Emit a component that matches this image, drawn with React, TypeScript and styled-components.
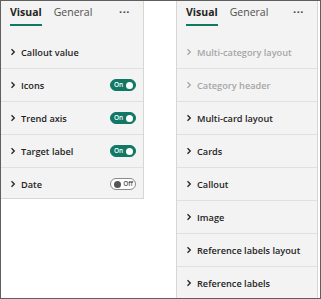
import React from "react";
import styled, { createGlobalStyle } from "styled-components";

const GlobalStyle = createGlobalStyle`
	html, body {
		margin: 0;
		padding: 0;
		background: #ffffff;
	}
	* {
		box-sizing: border-box;
	}
`;

const Frame = styled.div`
	width: 321px;
	height: 299px;
	border: 1px solid #5f5f5f;
	background: #ffffff;
	display: flex;
	align-items: flex-start;
	gap: 32px;
	overflow: hidden;
	font-family: "Open Sans", "Noto Sans", sans-serif;
`;

const Panel = styled.div<{ $width: number; $height: number }>`
	width: ${p => p.$width}px;
	height: ${p => p.$height}px;
	background: #f3f3f3;
	border-right: 1px solid #d6d6d6;
	border-bottom: 1px solid #d6d6d6;
	border-left: ${p => (p.$height > 250 ? "1px solid #d6d6d6" : "none")};
	overflow: hidden;
	display: flex;
	flex-direction: column;
`;

const Header = styled.div`
	height: 35px;
	flex-shrink: 0;
	display: flex;
	align-items: flex-start;
	padding: 4px 9px 0 9px;
`;

const Tab = styled.div<{ $active?: boolean }>`
	font-size: 10.5px;
	font-weight: ${p => (p.$active ? 700 : 400)};
	color: ${p => (p.$active ? "#252423" : "#4f4f4f")};
	padding-bottom: 4px;
	margin-right: 12px;
	line-height: 15px;
	border-bottom: 2px solid ${p => (p.$active ? "#117865" : "transparent")};
`;

const More = styled.div`
	margin-left: auto;
	font-size: 11px;
	color: #444;
	letter-spacing: 0.5px;
	line-height: 13px;
	font-weight: 700;
	margin-right: 4px;
`;

const Row = styled.div<{ $disabled?: boolean }>`
	height: 33px;
	flex-shrink: 0;
	border-bottom: 1px solid #e0e0e0;
	display: flex;
	align-items: center;
	padding: 0 7px 0 9px;
	font-size: 9.2px;
	font-weight: 600;
	color: ${p => (p.$disabled ? "#a6a6a6" : "#252423")};
`;

const Chevron = styled.svg`
	width: 6px;
	height: 8px;
	margin-right: 5px;
	flex-shrink: 0;
`;

const Label = styled.span`
	flex: 1;
	white-space: nowrap;
`;

const Toggle = styled.div<{ $on: boolean }>`
	width: 26px;
	height: 12px;
	border-radius: 6px;
	display: flex;
	align-items: center;
	flex-direction: ${p => (p.$on ? "row" : "row-reverse")};
	justify-content: space-between;
	padding: 0 2px 0 3px;
	background: ${p => (p.$on ? "#117865" : "#ffffff")};
	border: 1px solid ${p => (p.$on ? "#117865" : "#8a8a8a")};
	font-size: 6.5px;
	font-weight: 600;
	color: ${p => (p.$on ? "#ffffff" : "#555555")};
	line-height: 1;
`;

const Knob = styled.span<{ $on: boolean }>`
	width: 7px;
	height: 7px;
	border-radius: 50%;
	background: ${p => (p.$on ? "#ffffff" : "#555555")};
`;

const Arrow = ({ color }: { color: string }) => (
	<Chevron viewBox="0 0 6 8">
		<path d="M1.5 1.2 L4.3 4 L1.5 6.8" fill="none" stroke={color} strokeWidth="1.3" />
	</Chevron>
);

type Item = { label: string; toggle?: boolean; disabled?: boolean };

const leftItems: Item[] = [
	{ label: "Callout value" },
	{ label: "Icons", toggle: true },
	{ label: "Trend axis", toggle: true },
	{ label: "Target label", toggle: true },
	{ label: "Date", toggle: false },
];

const rightItems: Item[] = [
	{ label: "Multi-category layout", disabled: true },
	{ label: "Category header", disabled: true },
	{ label: "Multi-card layout" },
	{ label: "Cards" },
	{ label: "Callout" },
	{ label: "Image" },
	{ label: "Reference labels layout" },
	{ label: "Reference labels" },
];

const FormatPane = ({ items, width, height }: { items: Item[]; width: number; height: number }) => (
	<Panel $width={width} $height={height}>
		<Header>
			<Tab $active>Visual</Tab>
			<Tab>General</Tab>
			<More>···</More>
		</Header>
		{items.map(item => (
			<Row key={item.label} $disabled={item.disabled}>
				<Arrow color={item.disabled ? "#a6a6a6" : "#252423"} />
				<Label>{item.label}</Label>
				{item.toggle !== undefined && (
					<Toggle $on={item.toggle}>
						<span>{item.toggle ? "On" : "Off"}</span>
						<Knob $on={item.toggle} />
					</Toggle>
				)}
			</Row>
		))}
	</Panel>
);

export default function App() {
	return (
		<>
			<GlobalStyle />
			<Frame>
				<FormatPane items={leftItems} width={143} height={198} />
				<FormatPane items={rightItems} width={142} height={300} />
			</Frame>
		</>
	);
}
